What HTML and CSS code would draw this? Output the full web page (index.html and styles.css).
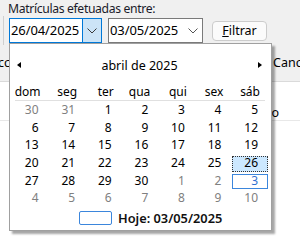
FILE: index.html
```html
<!DOCTYPE html>
<html lang="pt">
<head>
    <meta charset="UTF-8">
    <title>Matrículas</title>
    <link rel="stylesheet" href="styles.css">
</head>
<body>
    <div class="filter">
        <div class="filter-label">Matrículas efetuadas entre:</div>
        <div class="filter-row">
            <div class="edge-box"></div>
            <div class="date-picker is-focused">
                <span class="date-text">26/04/2025</span>
                <span class="date-drop">
                    <svg width="10" height="6" viewBox="0 0 10 6"><path d="M0.5 0.5 L5 5 L9.5 0.5" fill="none" stroke="#3a3a3a" stroke-width="1"/></svg>
                </span>
            </div>
            <div class="date-picker is-wide">
                <span class="date-text">03/05/2025</span>
                <span class="date-drop">
                    <svg width="10" height="6" viewBox="0 0 10 6"><path d="M0.5 0.5 L5 5 L9.5 0.5" fill="none" stroke="#555" stroke-width="1"/></svg>
                </span>
            </div>
            <button class="btn"><u>F</u>iltrar</button>
        </div>
    </div>

    <div class="actions">
        <span class="action-left">Accionar</span>
        <span class="action-right">Cancelar</span>
    </div>

    <div class="grid-panel">
        <div class="grid-header"><span>Período</span></div>
    </div>

    <!-- calendário aberto do primeiro seletor -->
    <div class="calendar">
        <div class="cal-head">
            <span class="cal-arrow cal-prev"></span>
            <span class="cal-title">abril de 2025</span>
            <span class="cal-arrow cal-next"></span>
        </div>
        <div class="cal-weekdays">
            <span>dom</span><span>seg</span><span>ter</span><span>qua</span><span>qui</span><span>sex</span><span>sáb</span>
        </div>
        <div class="cal-rule"></div>
        <div class="cal-days">
            <span class="day is-other">30</span><span class="day is-other">31</span><span class="day">1</span><span class="day">2</span><span class="day">3</span><span class="day">4</span><span class="day">5</span>
            <span class="day">6</span><span class="day">7</span><span class="day">8</span><span class="day">9</span><span class="day">10</span><span class="day">11</span><span class="day">12</span>
            <span class="day">13</span><span class="day">14</span><span class="day">15</span><span class="day">16</span><span class="day">17</span><span class="day">18</span><span class="day">19</span>
            <span class="day">20</span><span class="day">21</span><span class="day">22</span><span class="day">23</span><span class="day">24</span><span class="day">25</span><span class="day is-selected"><b>26</b></span>
            <span class="day">27</span><span class="day">28</span><span class="day">29</span><span class="day">30</span><span class="day is-other">1</span><span class="day is-other">2</span><span class="day is-today"><b>3</b></span>
            <span class="day is-other">4</span><span class="day is-other">5</span><span class="day is-other">6</span><span class="day is-other">7</span><span class="day is-other">8</span><span class="day is-other">9</span><span class="day is-other">10</span>
        </div>
        <div class="cal-today">
            <span class="today-box"></span>
            <span class="today-text">Hoje: 03/05/2025</span>
        </div>
    </div>
</body>
</html>
```

FILE: styles.css
```css
/* base */
body {
    margin: 0;
    width: 300px;
    height: 246px;
    overflow: hidden;
    position: relative;
    background: #f0f0f0;
    font-family: "Noto Sans", "Open Sans", sans-serif;
    font-size: 12px;
    color: #000;
}

/* filtro */
.filter-label {
    padding-left: 8px;
    height: 18px;
    line-height: 18px;
    font-size: 12.2px;
    letter-spacing: -0.35px;
    color: #1a1a2a;
}

.filter-row {
    display: flex;
    align-items: center;
    height: 25px;
}

.edge-box {
    width: 3px;
    height: 29px;
    border-right: 1px solid #cfcfcf;
    margin-right: 5px;
}

.date-picker {
    display: flex;
    box-sizing: border-box;
    width: 93px;
    height: 25px;
    border: 1px solid #7a7a7a;
    background: #fff;
}

.date-picker.is-focused {
    border-color: #0078d7;
}

.date-picker.is-wide {
    width: 95px;
    margin-left: 6px;
}

.date-text {
    flex: 1;
    padding-left: 1px;
    line-height: 23px;
    font-size: 13px;
    letter-spacing: -0.1px;
}

.date-drop {
    width: 19px;
    display: flex;
    align-items: center;
    justify-content: center;
}

.is-focused .date-drop {
    width: 18px;
    background: #cce4f7;
    border-left: 1px solid #0078d7;
}

.btn {
    margin-left: 9px;
    width: 55px;
    height: 20px;
    padding: 0;
    border: 1px solid #cccccc;
    border-radius: 4px;
    background: #fbfbfb;
    font-family: inherit;
    font-size: 12.5px;
    color: #000;
}

/* fundo atrás do calendário */
.actions {
    display: flex;
    height: 38px;
    align-items: center;
    white-space: nowrap;
    font-size: 12.5px;
}

.action-left {
    flex-shrink: 0;
    margin-left: -10px;
    width: 283px;
}

.action-right {
    flex-shrink: 0;
}

.grid-panel {
    background: #fff;
    border-top: 1px solid #dadada;
    height: 164px;
}

.grid-header {
    display: flex;
    justify-content: flex-end;
    align-items: flex-end;
    height: 38px;
    padding-right: 21px;
    border-bottom: 1px solid #e8e8e8;
    line-height: 14px;
    font-size: 12.5px;
}

/* calendário */
.calendar {
    position: absolute;
    left: 9px;
    top: 43px;
    width: 263px;
    height: 188px;
    box-sizing: border-box;
    padding: 10px 3px 0 2px;
    border: 1px solid #a0a0a0;
    background: #fff;
    box-shadow: 3px 3px 2px rgba(0, 0, 0, 0.35);
}

.cal-head {
    display: flex;
    align-items: center;
    justify-content: space-between;
    height: 22px;
    padding: 0 6px 0 5px;
}

.cal-title {
    font-size: 12.5px;
}

.cal-arrow {
    width: 0;
    height: 0;
    border-top: 3.5px solid transparent;
    border-bottom: 3.5px solid transparent;
}

.cal-prev {
    border-right: 4px solid #000;
}

.cal-next {
    border-left: 4px solid #000;
}

.cal-weekdays {
    display: grid;
    grid-template-columns: repeat(7, 1fr);
    margin-top: 8px;
    line-height: 16px;
}

.cal-weekdays span {
    text-align: right;
    padding-right: 8px;
}

.cal-rule {
    height: 1px;
    margin: 0 3px;
    background: #e0e0e0;
}

.cal-days {
    display: grid;
    grid-template-columns: repeat(7, 1fr);
    grid-auto-rows: 17.7px;
}

.day {
    position: relative;
    text-align: right;
    padding-right: 10px;
    line-height: 17.7px;
    color: #000;
}

.day b {
    position: relative;
    font-weight: normal;
}

.day.is-other {
    color: #808080;
}

.day.is-selected::before,
.day.is-today::before {
    content: '';
    position: absolute;
    top: 2px;
    left: 1px;
    right: 0;
    bottom: 0;
    box-sizing: border-box;
}

.day.is-selected::before {
    background: #cce8ff;
    border: 1px dotted #333;
}

.day.is-today::before {
    border: 1px solid #3b86dc;
}

.day.is-today {
    color: #2f6fd0;
}

.cal-today {
    display: flex;
    align-items: center;
    height: 20px;
    margin-top: 1px;
    padding-left: 67px;
}

.today-box {
    width: 33px;
    height: 14px;
    box-sizing: border-box;
    margin-right: 6px;
    border: 1px solid #3b86dc;
    border-radius: 2px;
}

.today-text {
    font-size: 12.8px;
    font-weight: 600;
    color: #111;
}
```
